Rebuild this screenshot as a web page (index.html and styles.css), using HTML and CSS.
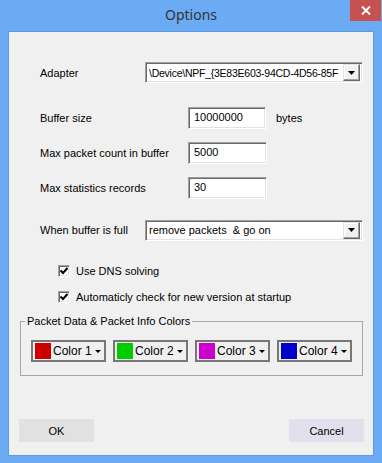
FILE: index.html
```html
<!DOCTYPE html>
<html lang="en">
<head>
    <meta charset="UTF-8">
    <title>Options</title>
    <link rel="stylesheet" href="styles.css">
</head>
<body>

<div class="window">
    <div class="titlebar">
        <span></span>
        <span class="title">Options</span>
        <button class="close" title="Close">
            <svg width="10" height="9" viewBox="0 0 10 9"><path d="M1 0.5 L9 8.5 M9 0.5 L1 8.5" stroke="#fff" stroke-width="2"/></svg>
        </button>
    </div>

    <div class="client">
        <!-- adapter -->
        <div class="row row-adapter">
            <label class="lbl lbl-combo">Adapter</label>
            <div class="combo">
                <span class="combo-text combo-text-tight">\Device\NPF_{3E83E603-94CD-4D56-85F</span>
                <span class="combo-btn"><svg width="7" height="4" viewBox="0 0 7 4"><path d="M0 0 H7 L3.5 4 Z" fill="#000"/></svg></span>
            </div>
        </div>

        <div class="row row-buffer">
            <label class="lbl lbl-input">Buffer size</label>
            <input class="field field-short" type="text" value="10000000">
            <span class="unit">bytes</span>
        </div>

        <div class="row row-num">
            <label class="lbl lbl-input">Max packet count in buffer</label>
            <input class="field" type="text" value="5000">
        </div>

        <div class="row row-num">
            <label class="lbl lbl-input">Max statistics records</label>
            <input class="field" type="text" value="30">
        </div>

        <div class="row row-full">
            <label class="lbl lbl-combo">When buffer is full</label>
            <div class="combo">
                <span class="combo-text">remove packets  &amp; go on</span>
                <span class="combo-btn"><svg width="7" height="4" viewBox="0 0 7 4"><path d="M0 0 H7 L3.5 4 Z" fill="#000"/></svg></span>
            </div>
        </div>

        <!-- checkboxes -->
        <div class="check check-first">
            <span class="box"><svg width="10" height="10" viewBox="0 0 10 10"><path d="M1.5 4.5 L4 7 L8.5 2" stroke="#000" stroke-width="2" fill="none"/></svg></span>
            <span>Use DNS solving</span>
        </div>
        <div class="check">
            <span class="box"><svg width="10" height="10" viewBox="0 0 10 10"><path d="M1.5 4.5 L4 7 L8.5 2" stroke="#000" stroke-width="2" fill="none"/></svg></span>
            <span>Automaticly check for new version at startup</span>
        </div>

        <fieldset class="group">
            <legend>Packet Data &amp; Packet Info Colors</legend>
            <div class="colors">
                <button class="color-btn"><span class="swatch red"></span>Color 1<span class="caret"></span></button>
                <button class="color-btn"><span class="swatch green"></span>Color 2<span class="caret"></span></button>
                <button class="color-btn"><span class="swatch magenta"></span>Color 3<span class="caret"></span></button>
                <button class="color-btn"><span class="swatch blue"></span>Color 4<span class="caret"></span></button>
            </div>
        </fieldset>

        <div class="actions">
            <button class="btn">OK</button>
            <button class="btn btn-cancel">Cancel</button>
        </div>
    </div>
</div>

</body>
</html>
```

FILE: styles.css
```css
body {
    margin: 0;
    font-family: "Liberation Sans", Arial, sans-serif;
    font-size: 11px;
    color: #000;
}
.window {
    width: 382px;
    height: 463px;
    box-sizing: border-box;
    background: #6aabf4;
    padding: 0 8px 7px 8px;
    display: flex;
    flex-direction: column;
}
.titlebar {
    height: 31px;
    display: grid;
    grid-template-columns: 1fr auto 1fr;
    align-items: start;
}
.title {
    font-family: "Noto Sans", "Open Sans", sans-serif;
    font-size: 14px;
    color: #333;
    padding-top: 5px;
}
.close {
    justify-self: end;
    margin-right: -7px;
    width: 31px;
    height: 21px;
    border: none;
    padding: 0;
    background: #c75050;
    display: flex;
    align-items: center;
    justify-content: center;
}
.client {
    flex: 1;
    background: #f0f0f0;
    border: 1px solid #5d9ce4;
    display: flex;
    flex-direction: column;
}

/* form rows */
.row {
    display: flex;
    align-items: center;
    padding-left: 31px;
}
.row-adapter { margin-top: 30px; height: 21px; }
.row-buffer { margin-top: 24px; height: 22px; }
.row-num { margin-top: 13px; height: 22px; }
.row-full { margin-top: 20px; height: 22px; }
.lbl-combo { width: 105px; }
.lbl-input { width: 148px; }
.unit { margin-left: 10px; }

.field {
    width: 79px;
    height: 22px;
    box-sizing: border-box;
    font-family: inherit;
    font-size: 11px;
    padding: 0 0 3px 5px;
    background: #fff;
    border: 1px solid;
    border-color: #a0a0a0 #fff #fff #a0a0a0;
    box-shadow: inset 1px 1px #696969, inset -1px -1px #e3e3e3;
    outline: none;
}
.field-short { width: 78px; }

.combo {
    width: 218px;
    height: 21px;
    box-sizing: border-box;
    background: #fff;
    border: 1px solid;
    border-color: #a0a0a0 #fff #fff #a0a0a0;
    box-shadow: inset 1px 1px #696969, inset -1px -1px #e3e3e3;
    display: flex;
    align-items: center;
    padding: 2px 2px 2px 3px;
}
.combo-text {
    flex: 1;
    overflow: hidden;
    white-space: pre;
    font-size: 11px;
}
.combo-text-tight {
    font-size: 10.5px;
    letter-spacing: -0.25px;
}
.combo-btn {
    flex: none;
    width: 17px;
    height: 17px;
    box-sizing: border-box;
    background: #f0f0f0;
    border: 1px solid;
    border-color: #e3e3e3 #696969 #696969 #e3e3e3;
    box-shadow: inset -1px -1px #a0a0a0, inset 1px 1px #fff;
    display: flex;
    align-items: center;
    justify-content: center;
}

/* checkboxes */
.check {
    display: flex;
    align-items: center;
    gap: 6px;
    padding-left: 49px;
    height: 15px;
    margin-top: 11px;
}
.check-first { margin-top: 22px; }
.box {
    width: 12px;
    height: 12px;
    box-sizing: border-box;
    background: #fff;
    border: 1px solid;
    border-color: #a0a0a0 #fff #fff #a0a0a0;
    box-shadow: inset 1px 1px #696969, inset -1px -1px #e3e3e3;
    display: flex;
    align-items: center;
    justify-content: center;
}

/* group box */
.group {
    margin: 11px 0 0 11px;
    width: 343px;
    box-sizing: border-box;
    border: 1px solid #a8a8a8;
    padding: 13px 0 13px 10px;
}
.group legend {
    padding: 0 2px;
    margin-left: -6px;
    font-size: 11px;
}
.colors {
    display: flex;
    gap: 7px;
}
.color-btn {
    width: 75px;
    height: 22px;
    box-sizing: border-box;
    border: 2px solid #777;
    background: #f0f0f0;
    padding: 0 0 0 2px;
    display: flex;
    align-items: center;
    white-space: nowrap;
    font-family: inherit;
    font-size: 12px;
    color: #000;
}
.swatch {
    flex: none;
    width: 16px;
    height: 16px;
    margin-right: 2px;
}
.red { background: #cc0000; }
.green { background: #00cc00; }
.magenta { background: #cc00cc; }
.blue { background: #0000cc; }
.caret {
    flex: none;
    margin-left: auto;
    margin-right: 3px;
    border-left: 3px solid transparent;
    border-right: 3px solid transparent;
    border-top: 3px solid #000;
}

/* bottom buttons */
.actions {
    display: flex;
    justify-content: space-between;
    padding: 0 9px 0 10px;
    margin-top: 43px;
}
.btn {
    width: 75px;
    height: 23px;
    border: none;
    background: #e1e1e1;
    font-family: inherit;
    font-size: 11px;
    color: #000;
}
.btn-cancel { background: #e3e0ee; }
```
